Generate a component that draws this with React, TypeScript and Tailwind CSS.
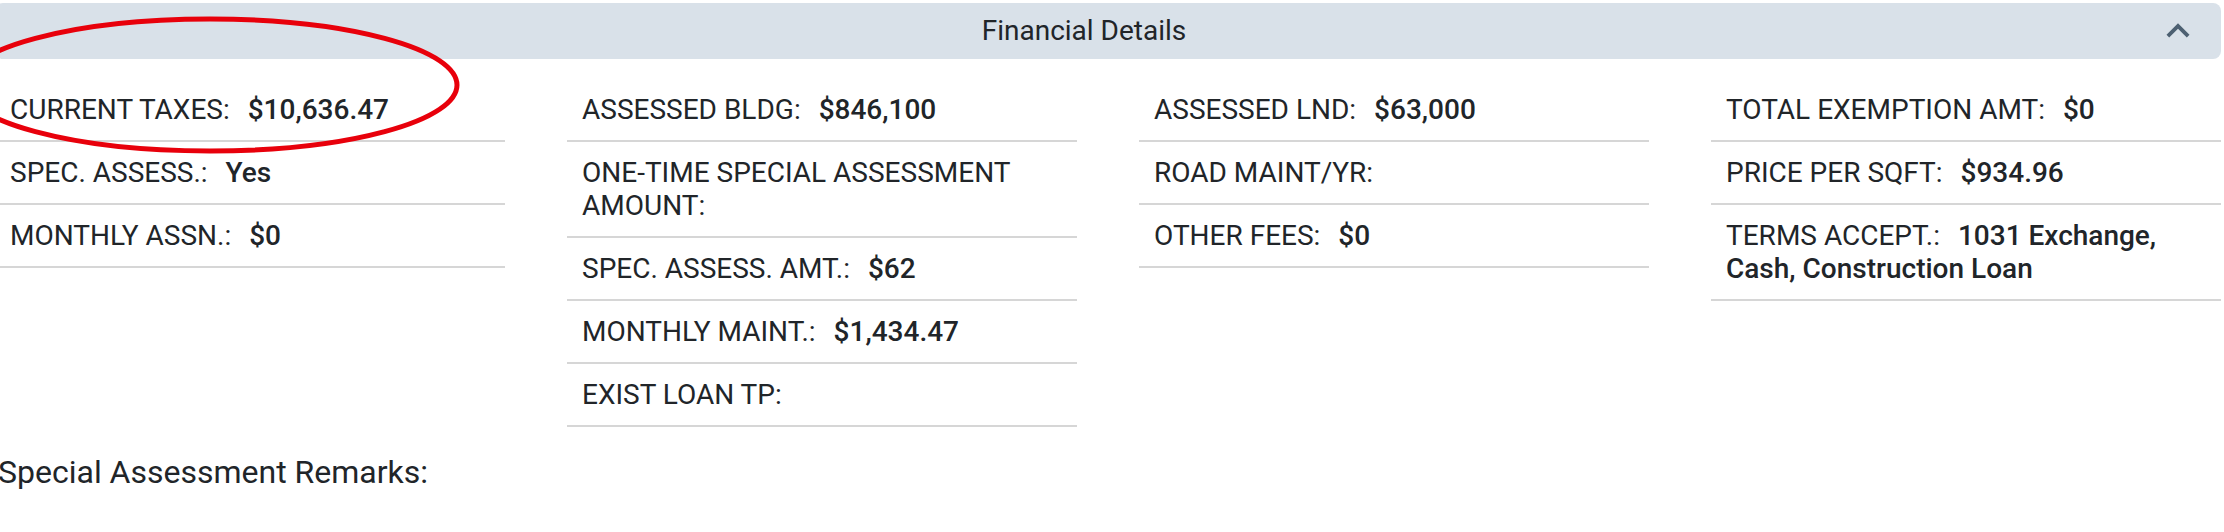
import { ReactNode } from 'react';

type Item = { label: string; value?: string };

const columns: Item[][] = [
  [
    { label: 'CURRENT TAXES:', value: '$10,636.47' },
    { label: 'SPEC. ASSESS.:', value: 'Yes' },
    { label: 'MONTHLY ASSN.:', value: '$0' },
  ],
  [
    { label: 'ASSESSED BLDG:', value: '$846,100' },
    { label: 'ONE-TIME SPECIAL ASSESSMENT AMOUNT:' },
    { label: 'SPEC. ASSESS. AMT.:', value: '$62' },
    { label: 'MONTHLY MAINT.:', value: '$1,434.47' },
    { label: 'EXIST LOAN TP:' },
  ],
  [
    { label: 'ASSESSED LND:', value: '$63,000' },
    { label: 'ROAD MAINT/YR:' },
    { label: 'OTHER FEES:', value: '$0' },
  ],
  [
    { label: 'TOTAL EXEMPTION AMT:', value: '$0' },
    { label: 'PRICE PER SQFT:', value: '$934.96' },
    { label: 'TERMS ACCEPT.:', value: '1031 Exchange, Cash, Construction Loan' },
  ],
];

const Row = ({ label, value }: Item) => (
  <div className="border-b-2 border-[#d6d6d6] px-[15px] py-[14px] text-[28px] leading-[33px]">
    {label}
    {value && (
      <>
        {' '}
        <span className="ml-[11px] font-medium">{value}</span>
      </>
    )}
  </div>
);

const Column = ({ children }: { children: ReactNode }) => (
  <div className="flex flex-col">{children}</div>
);

const App = () => {
  return (
    <div className="relative h-[532px] w-[2224px] overflow-hidden bg-white font-['Roboto',sans-serif] text-[#212529]">
      <div className="-ml-[5px] w-[2226px] pt-[3px]">
        {/* section header */}
        <div className="flex h-[56px] items-center rounded-[8px] bg-[#d9e1e9]">
          <div className="flex-1 pl-[18px] text-center text-[28px]">Financial Details</div>
          <svg viewBox="0 0 24 24" className="mr-[20px] h-[46px] w-[46px] fill-[#4d6072]">
            <path d="M12 8l-6 6 1.41 1.41L12 10.83l4.59 4.58L18 14z" />
          </svg>
        </div>

        <div className="mt-[20px] grid grid-cols-4 items-start gap-x-[62px]">
          {columns.map((col, i) => (
            <Column key={i}>
              {col.map((item) => (
                <Row key={item.label} {...item} />
              ))}
            </Column>
          ))}
        </div>

        <p className="mt-[26px] pl-[3px] text-[32px] leading-[38px]">Special Assessment Remarks:</p>
      </div>

      {/* red marker annotation */}
      <svg className="pointer-events-none absolute left-0 top-0" width="2224" height="532">
        <ellipse cx="210" cy="85" rx="247" ry="66" fill="none" stroke="#e8000b" strokeWidth="5" />
      </svg>
    </div>
  );
};

export default App;
